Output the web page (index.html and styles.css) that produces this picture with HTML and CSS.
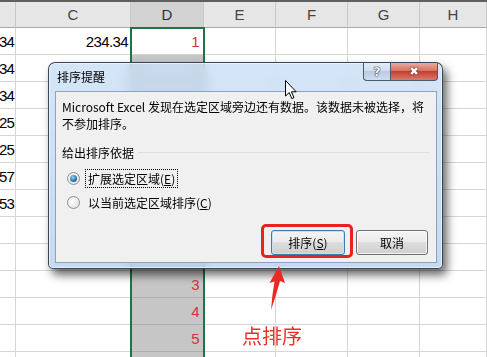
FILE: index.html
```html
<!DOCTYPE html>
<html lang="zh-CN">
<head>
    <meta charset="UTF-8">
    <title>排序提醒</title>
    <link rel="stylesheet" href="styles.css">
</head>
<body>
    <div class="topline"></div>
    <div class="sheet">
        <div class="hd"></div><div class="hd">C</div><div class="hd hd-sel">D</div><div class="hd">E</div><div class="hd">F</div><div class="hd">G</div><div class="hd">H</div>

        <div class="c num cut">34</div><div class="c num">234.34</div><div class="c num red">1</div><div class="c"></div><div class="c"></div><div class="c"></div><div class="c"></div>
        <div class="c num cut">34</div><div class="c"></div><div class="c sel"></div><div class="c"></div><div class="c"></div><div class="c"></div><div class="c"></div>
        <div class="c num cut">34</div><div class="c"></div><div class="c sel"></div><div class="c"></div><div class="c"></div><div class="c"></div><div class="c"></div>
        <div class="c num cut">25</div><div class="c"></div><div class="c sel"></div><div class="c"></div><div class="c"></div><div class="c"></div><div class="c"></div>
        <div class="c num cut">25</div><div class="c"></div><div class="c sel"></div><div class="c"></div><div class="c"></div><div class="c"></div><div class="c"></div>
        <div class="c num cut">57</div><div class="c"></div><div class="c sel"></div><div class="c"></div><div class="c"></div><div class="c"></div><div class="c"></div>
        <div class="c num cut">53</div><div class="c"></div><div class="c sel"></div><div class="c"></div><div class="c"></div><div class="c"></div><div class="c"></div>
        <div class="c"></div><div class="c"></div><div class="c sel"></div><div class="c"></div><div class="c"></div><div class="c"></div><div class="c"></div>
        <div class="c"></div><div class="c"></div><div class="c sel"></div><div class="c"></div><div class="c"></div><div class="c"></div><div class="c"></div>
        <div class="c"></div><div class="c"></div><div class="c sel num red">3</div><div class="c"></div><div class="c"></div><div class="c"></div><div class="c"></div>
        <div class="c"></div><div class="c"></div><div class="c sel num red">4</div><div class="c"></div><div class="c"></div><div class="c"></div><div class="c"></div>
        <div class="c"></div><div class="c"></div><div class="c sel num red">5</div><div class="c"></div><div class="c"></div><div class="c"></div><div class="c"></div>
        <div class="c last"></div><div class="c last"></div><div class="c sel last"></div><div class="c last"></div><div class="c last"></div><div class="c last"></div><div class="c last"></div>
    </div>
    <div class="selection"></div>

    <div class="dialog">
        <div class="titlebar">
            <span class="title">排序提醒</span>
            <span class="tb-btn help">?</span>
            <span class="tb-btn close">✖</span>
        </div>
        <div class="client">
            <p class="msg">Microsoft Excel 发现在选定区域旁边还有数据。该数据未被选择，将<br>不参加排序。</p>
            <div class="group-label"><span>给出排序依据</span><span class="rule"></span></div>
            <div class="option first">
                <span class="radio"><span class="dot"></span></span>
                <span class="focus">扩展选定区域(<u>E</u>)</span>
            </div>
            <div class="option">
                <span class="radio"></span>
                <span class="plain">以当前选定区域排序(<u>C</u>)</span>
            </div>
            <div class="buttons">
                <button class="btn default">排序(<u>S</u>)</button>
                <button class="btn">取消</button>
            </div>
        </div>
    </div>

    <svg class="cursor" width="13" height="20" viewBox="0 0 13 20">
        <path d="M0.5 0.5 L0.5 16 L4.2 12.6 L6.8 18.6 L9 17.6 L6.4 11.8 L11.2 11.8 Z" fill="#fff" stroke="#000" stroke-width="1"/>
    </svg>

    <div class="mark-box"></div>
    <svg class="mark-arrow" width="20" height="46" viewBox="266 265 20 46">
        <path d="M279 266 L285 283 L280 281 Q276 296 271 310 Q272 295 274.5 281.5 L269.5 283 Z" fill="#ea2a22"/>
    </svg>
    <div class="mark-text">点排序</div>
</body>
</html>
```

FILE: styles.css
```css
body {
    margin: 0;
    width: 487px;
    height: 357px;
    overflow: hidden;
    background: #fff;
    font-family: "Noto Sans CJK SC", sans-serif;
    position: relative;
}
.topline {
    height: 2px;
    background: #5f5f5f;
}
.sheet {
    display: grid;
    grid-template-columns: 16px 115px 73px 72px 72px 72px 67px;
    grid-template-rows: 26px repeat(12, 27px) 5px;
    font-family: "Liberation Sans", Arial, sans-serif;
}
.hd {
    box-sizing: border-box;
    background: #e6e6e6;
    border-right: 1px solid #c9c9c9;
    border-bottom: 1px solid #ababab;
    color: #444;
    font-size: 15px;
    display: flex;
    align-items: center;
    justify-content: center;
}
.hd-sel {
    background: #d2d2d2;
    color: #333;
}
.c {
    box-sizing: border-box;
    border-right: 1px solid #d6d6d6;
    border-bottom: 1px solid #d6d6d6;
    font-size: 15px;
    letter-spacing: -0.6px;
    color: #000;
}
.c.last {
    border-bottom: none;
}
.num {
    display: flex;
    align-items: center;
    justify-content: flex-end;
    padding-right: 2px;
}
.num.cut {
    padding-right: 1px;
    letter-spacing: -0.9px;
}
.sel {
    background: #c6c6c6;
    border-bottom-color: #afafaf;
}
.red {
    color: #d2323e;
    padding-right: 4px;
}
.selection {
    position: absolute;
    left: 130px;
    top: 27px;
    width: 75px;
    height: 330px;
    box-sizing: border-box;
    border: 2px solid #217346;
    border-bottom: none;
}

.dialog {
    position: absolute;
    left: 48px;
    top: 62px;
    width: 395px;
    height: 207px;
    box-sizing: border-box;
    border: 1px solid rgba(30, 45, 60, 0.85);
    border-radius: 7px 7px 5px 5px;
    background: linear-gradient(180deg, rgba(200, 222, 245, 0.78), rgba(184, 210, 238, 0.82));
    backdrop-filter: blur(6px);
    box-shadow: 4px 6px 10px rgba(0, 0, 0, 0.6), inset 0 0 0 1px rgba(255, 255, 255, 0.55);
    display: flex;
    flex-direction: column;
}
.titlebar {
    height: 28px;
    display: flex;
    align-items: flex-start;
    padding: 0 4px 0 8px;
}
.title {
    font-size: 12px;
    line-height: 28px;
    color: #000;
    margin-right: auto;
}
.tb-btn {
    height: 18px;
    box-sizing: border-box;
    border: 1px solid #4a5a6c;
    border-top: none;
    display: flex;
    align-items: center;
    justify-content: center;
    color: #fff;
    font-family: "DejaVu Sans", sans-serif;
    font-weight: bold;
}
.help {
    width: 27px;
    border-right: none;
    border-radius: 0 0 0 4px;
    background: linear-gradient(180deg, #e4edf7, #cfdded 45%, #b8cbe0 50%, #cddff1);
    font-size: 13px;
    color: #f6f6f6;
    text-shadow: 0 0 1px #222, 0 0 1px #222, 0 0 1px #222;
}
.close {
    width: 48px;
    border-radius: 0 0 4px 0;
    background: linear-gradient(180deg, #e9a99e, #d57665 45%, #c4412f 50%, #d9796a);
    font-size: 11px;
    text-shadow: 0 0 2px #5a1a10, 0 0 1px #5a1a10;
}
.client {
    flex: 1;
    margin: 0 5px 5px 6px;
    border: 1px solid #8ea3bb;
    background: #f0f0f0;
    padding: 0 7px 0 6px;
    font-size: 12px;
    color: #000;
}
.msg {
    margin: 6px 0 0;
    line-height: 17px;
    white-space: nowrap;
}
.group-label {
    display: flex;
    align-items: center;
    margin-top: 12px;
    line-height: 17px;
}
.rule {
    flex: 1;
    height: 1px;
    background: #d5dfe5;
    margin: 0 0 0 4px;
}
.option {
    display: flex;
    align-items: center;
    height: 20px;
    margin-left: 5px;
    margin-top: 4px;
}
.option.first {
    margin-top: 7px;
}
.radio {
    width: 13px;
    height: 13px;
    box-sizing: border-box;
    border-radius: 50%;
    border: 1px solid #8c8f92;
    background: radial-gradient(circle at 40% 40%, #ffffff, #dcdcdc);
    display: flex;
    align-items: center;
    justify-content: center;
    margin-right: 5px;
}
.dot {
    width: 7px;
    height: 7px;
    border-radius: 50%;
    background: radial-gradient(circle at 40% 35%, #9bd6f6, #2a79b5 55%, #0f416f);
}
.focus {
    border: 1px dotted #000;
    padding: 0 2px 0 2px;
    line-height: 17px;
}
.plain {
    padding: 0 3px;
}
.buttons {
    display: flex;
    justify-content: flex-end;
    gap: 11px;
    margin-top: 18px;
    padding-right: 1px;
}
.btn {
    width: 74px;
    height: 25px;
    border: 1px solid #707070;
    border-radius: 3px;
    background: linear-gradient(180deg, #f3f3f3, #ebebeb 50%, #dddddd 50%, #cfcfcf);
    box-shadow: inset 0 0 0 1px rgba(255, 255, 255, 0.75);
    font-family: "Noto Sans CJK SC", sans-serif;
    font-size: 12px;
    color: #000;
    padding: 0;
}
.btn + .btn {
    width: 72px;
}
.btn.default {
    border-color: #3d7bad;
    box-shadow: inset 0 0 0 1px #bfe3f7;
}

.cursor {
    position: absolute;
    left: 285px;
    top: 80px;
}
.mark-box {
    position: absolute;
    left: 261px;
    top: 224px;
    width: 92px;
    height: 34px;
    box-sizing: border-box;
    border: 3px solid #e8231f;
    border-radius: 5px;
}
.mark-arrow {
    position: absolute;
    left: 266px;
    top: 265px;
}
.mark-text {
    position: absolute;
    left: 242px;
    top: 325px;
    font-size: 20px;
    line-height: 22px;
    color: #e8312a;
}
```
